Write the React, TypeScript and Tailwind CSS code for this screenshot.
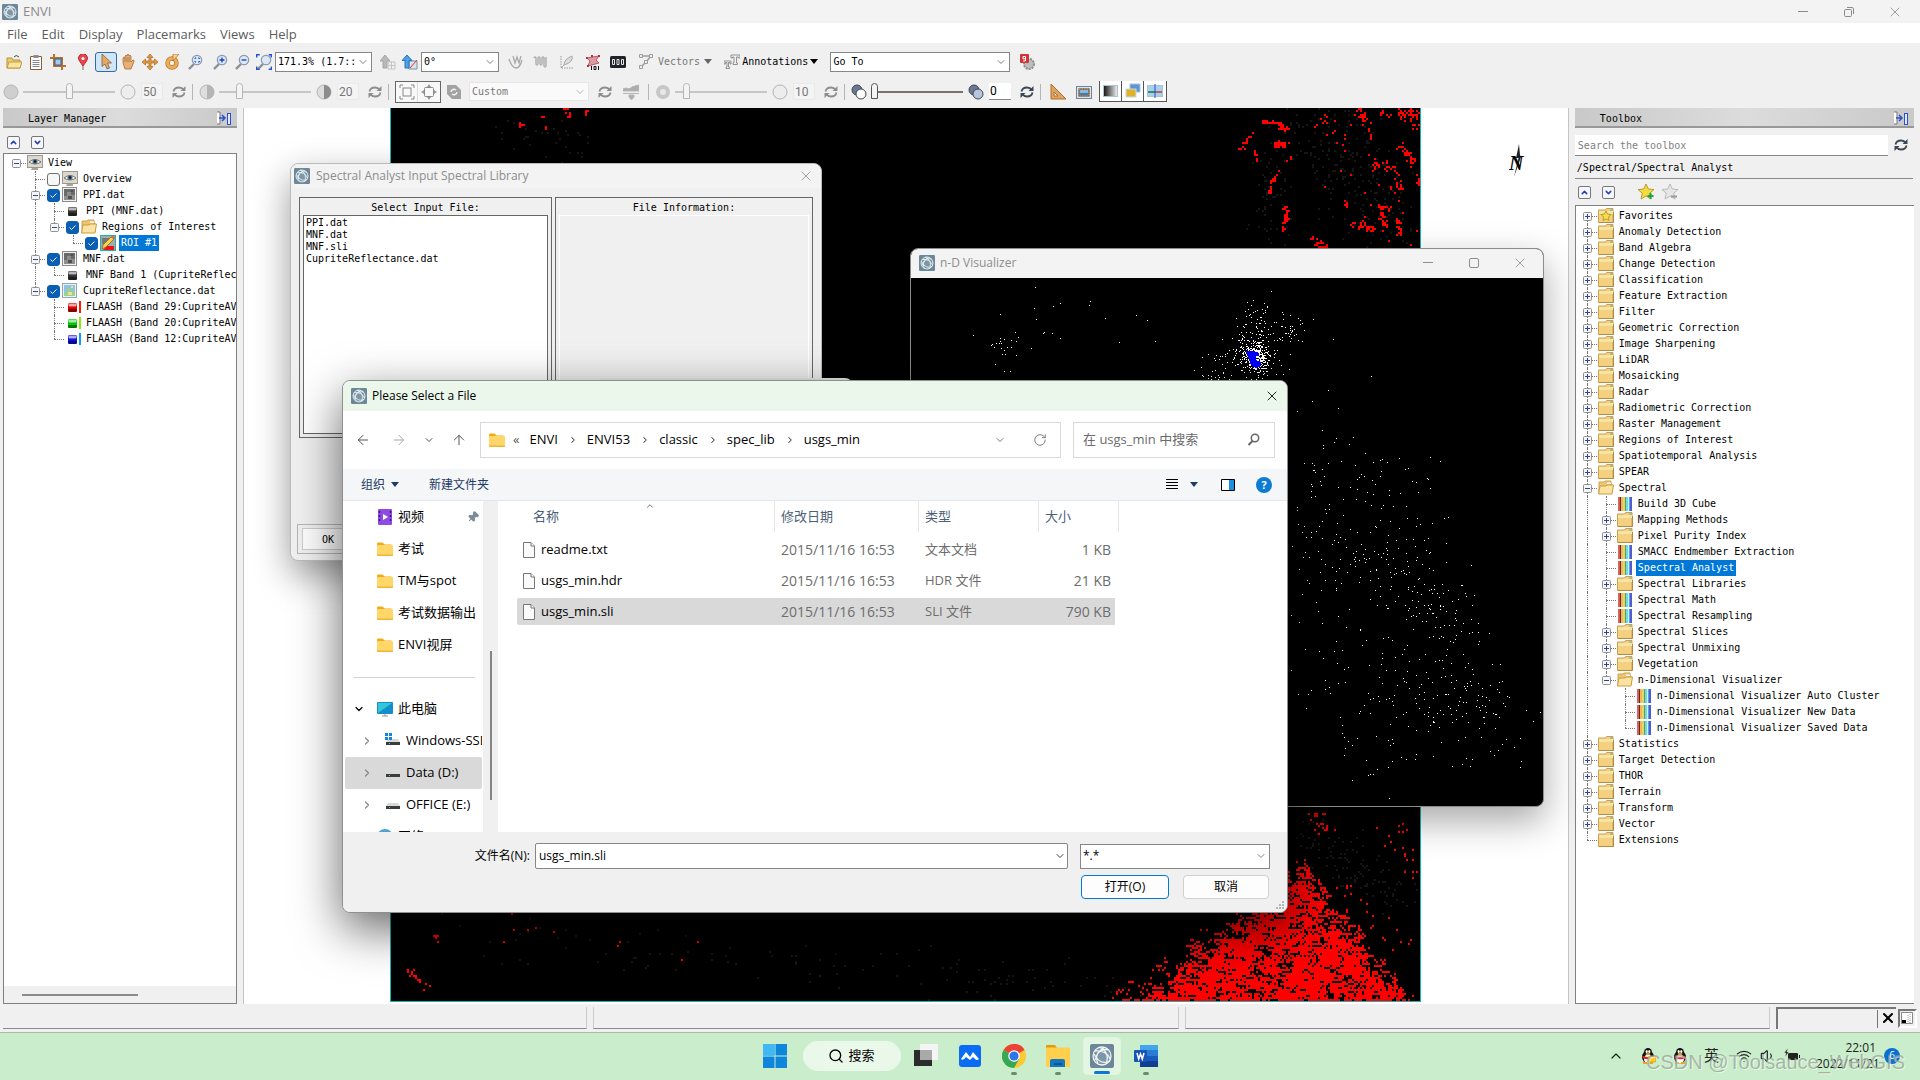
import React from 'react';
import clsx from 'clsx';
import { ArrowLeft, ArrowRight, ArrowUp, ChevronDown, ChevronRight, ChevronUp, Pin, RotateCw, Search, Wifi, Volume1, X } from 'lucide-react';

interface TreeNode {
  label: string;
  icon: string;
  checked?: boolean;
  selected?: boolean;
  collapsed?: boolean;
  children?: TreeNode[];
}

const layers: TreeNode[] = [
  {
    label: 'View',
    icon: 'view',
    children: [
      { label: 'Overview', icon: 'view', checked: false },
      {
        label: 'PPI.dat',
        icon: 'raster',
        checked: true,
        children: [
          { label: 'PPI (MNF.dat)', icon: 'gray' },
          {
            label: 'Regions of Interest',
            icon: 'open',
            checked: true,
            children: [{ label: 'ROI #1', icon: 'roi', checked: true, selected: true }],
          },
        ],
      },
      {
        label: 'MNF.dat',
        icon: 'raster',
        checked: true,
        children: [{ label: 'MNF Band 1 (CupriteReflectance.dat)', icon: 'gray' }],
      },
      {
        label: 'CupriteReflectance.dat',
        icon: 'rgb',
        checked: true,
        children: [
          { label: 'FLAASH (Band 29:CupriteAVIRIS)', icon: 'red' },
          { label: 'FLAASH (Band 20:CupriteAVIRIS)', icon: 'green' },
          { label: 'FLAASH (Band 12:CupriteAVIRIS)', icon: 'blue' },
        ],
      },
    ],
  },
];

const folder = (label: string): TreeNode => ({ label, icon: 'folder', collapsed: true });
const tool = (label: string, selected = false): TreeNode => ({ label, icon: 'tool', selected });

const toolbox: TreeNode[] = [
  { label: 'Favorites', icon: 'favorites', collapsed: true },
  folder('Anomaly Detection'),
  folder('Band Algebra'),
  folder('Change Detection'),
  folder('Classification'),
  folder('Feature Extraction'),
  folder('Filter'),
  folder('Geometric Correction'),
  folder('Image Sharpening'),
  folder('LiDAR'),
  folder('Mosaicking'),
  folder('Radar'),
  folder('Radiometric Correction'),
  folder('Raster Management'),
  folder('Regions of Interest'),
  folder('Spatiotemporal Analysis'),
  folder('SPEAR'),
  {
    label: 'Spectral',
    icon: 'open',
    children: [
      tool('Build 3D Cube'),
      folder('Mapping Methods'),
      folder('Pixel Purity Index'),
      tool('SMACC Endmember Extraction'),
      tool('Spectral Analyst', true),
      folder('Spectral Libraries'),
      tool('Spectral Math'),
      tool('Spectral Resampling'),
      folder('Spectral Slices'),
      folder('Spectral Unmixing'),
      folder('Vegetation'),
      {
        label: 'n-Dimensional Visualizer',
        icon: 'open',
        children: [
          tool('n-Dimensional Visualizer Auto Cluster'),
          tool('n-Dimensional Visualizer New Data'),
          tool('n-Dimensional Visualizer Saved Data'),
        ],
      },
    ],
  },
  folder('Statistics'),
  folder('Target Detection'),
  folder('THOR'),
  folder('Terrain'),
  folder('Transform'),
  folder('Vector'),
  { label: 'Extensions', icon: 'folder' },
];

const files = [
  { name: 'readme.txt', date: '2015/11/16 16:53', type: '文本文档', size: '1 KB' },
  { name: 'usgs_min.hdr', date: '2015/11/16 16:53', type: 'HDR 文件', size: '21 KB' },
  { name: 'usgs_min.sli', date: '2015/11/16 16:53', type: 'SLI 文件', size: '790 KB' },
];

// small seeded generator, so that the clouds come out the same on every render
function createRandom(seed: number) {
  let s = seed;
  return () => {
    s = (s * 1664525 + 1013904223) % 4294967296;
    return s / 4294967296;
  };
}

function gauss(random: () => number) {
  return (random() + random() + random() + random() - 2) * 1.2;
}

// x1, y1, x2, y2, spread, count
type Streak = [number, number, number, number, number, number];

const roiStreaks: Streak[] = [
  [1262, 121, 1277, 121, 1, 16],
  [1276, 122, 1286, 130, 2, 24],
  [1251, 133, 1240, 150, 2, 14],
  [1273, 144, 1284, 144, 3, 44],
  [1253, 150, 1256, 160, 1, 8],
  [1291, 154, 1286, 164, 1, 6],
  [1278, 171, 1268, 182, 2, 12],
  [1269, 186, 1269, 193, 1, 8],
  [1285, 205, 1285, 218, 2, 26],
  [1283, 220, 1283, 230, 1, 12],
  [1360, 109, 1367, 128, 3, 30],
  [1367, 128, 1372, 138, 1, 6],
  [1395, 112, 1418, 112, 4, 44],
  [1412, 123, 1416, 127, 2, 8],
  [1396, 143, 1414, 162, 3, 34],
  [1373, 163, 1396, 169, 3, 30],
  [1396, 170, 1398, 195, 3, 16],
  [1417, 170, 1417, 184, 1, 10],
  [1345, 201, 1347, 206, 1, 8],
  [1376, 206, 1392, 208, 2, 16],
  [1381, 214, 1387, 229, 3, 22],
  [1351, 223, 1376, 229, 3, 30],
  [1397, 218, 1399, 234, 2, 26],
  [1311, 239, 1325, 247, 3, 18],
  [1316, 124, 1332, 118, 3, 8],
  [1380, 109, 1390, 118, 3, 8],
  [1320, 110, 1410, 245, 26, 34],
  [517, 123, 522, 125, 1, 10],
  [564, 109, 570, 116, 2, 10],
  [581, 109, 587, 112, 2, 6],
  [541, 112, 552, 152, 3, 4],
  [434, 935, 436, 941, 2, 5],
  [408, 972, 424, 988, 3, 16],
  [500, 925, 700, 955, 12, 10],
  [1310, 815, 1330, 830, 6, 20],
  [1385, 812, 1415, 880, 10, 20],
  [1340, 890, 1410, 950, 12, 24],
];

function streakPath(streaks: Streak[], seed: number, cell: number) {
  const random = createRandom(seed);
  const cells = new Set<string>();
  streaks.forEach(([x1, y1, x2, y2, spread, count]) => {
    for (let i = 0; i < count; i++) {
      const t = random();
      const x = x1 + (x2 - x1) * t + gauss(random) * spread;
      const y = y1 + (y2 - y1) * t + gauss(random) * spread;
      cells.add(`${Math.round(x / cell) * cell} ${Math.round(y / cell) * cell}`);
    }
  });
  return [...cells].map((c) => `M${c}h${cell}v${cell}h-${cell}z`).join('');
}

// the big red slope at the lower right of the scene
function slopePath() {
  const random = createRandom(41);
  let d = '';
  for (let y = 858; y < 1001; y += 2) {
    const t = (y - 858) / 143;
    const left = 1286 - Math.pow(t, 1.1) * 184;
    const right = 1304 + t * 112;
    let filled = false;
    for (let x = left; x < right; x += 2) {
      const wave = Math.sin(x * 0.23 + y * 0.09) + Math.sin(y * 0.27 - x * 0.16) + Math.sin((x + y) * 0.061);
      const edge = Math.min((x - left) / 110, (right - x) / 50);
      const chance = Math.min(0.74, 0.16 + edge) + wave * 0.09 + (filled ? 0.1 : -0.1);
      filled = random() < chance;
      if (filled) {
        d += `M${Math.round(x / 2) * 2} ${y}h2v2h-2z`;
      }
    }
  }
  return d;
}

const noiseStreaks: Streak[] = [
  [1310, 110, 1400, 240, 34, 260],
  [1270, 150, 1270, 240, 14, 60],
  [500, 115, 600, 150, 18, 40],
  [420, 930, 1150, 990, 18, 120],
  [1300, 830, 1410, 900, 20, 120],
];

const cloudStreaks: Streak[] = [
  [1252, 352, 1258, 362, 7, 420],
  [1250, 340, 1262, 368, 14, 240],
  [1258, 325, 1262, 305, 14, 40],
  [1284, 342, 1292, 318, 11, 40],
  [1210, 365, 1235, 375, 18, 46],
  [996, 348, 1012, 352, 12, 22],
  [985, 330, 1180, 325, 24, 20],
  [1292, 380, 1360, 500, 32, 22],
  [1310, 480, 1420, 470, 18, 40],
  [1300, 500, 1310, 620, 26, 50],
  [1370, 520, 1420, 620, 44, 150],
  [1420, 600, 1480, 720, 42, 150],
  [1320, 640, 1400, 770, 40, 80],
  [1400, 700, 1500, 730, 36, 50],
];

const mono = "font-['DejaVu_Sans_Mono','Noto_Sans_CJK_SC',monospace] text-[10px]";

function EnviLogo({ className }: { className: string }) {
  return (
    <svg viewBox="0 0 24 24" className={clsx('shrink-0', className)} fill="none">
      <rect width="24" height="24" rx="2" fill="#6b8799" />
      <circle cx="12" cy="12" r="9" fill="#7d97a7" stroke="#f1f5f7" strokeWidth="1.3" />
      <path d="M5 16C7 8 12 4 19 6M4 10c4 8 10 10 16 7M9 3c7 3 10 9 7 17M14 4C7 7 5 13 8 20M5 7c7-1 13 2 15 8" stroke="#eef3f5" strokeWidth="1.3" />
    </svg>
  );
}

function FolderShape({ className }: { className?: string }) {
  return (
    <svg viewBox="0 0 16 16" className={clsx('size-4 shrink-0', className)}>
      <path d="M0 2.700Q0 1.500 1.200 1.500h4.300L7.500 3.500H14q1 0 1 1v2H0z" fill="#f0ac12" />
      <rect y="4" width="16" height="11" rx="1" fill="#ffd768" />
      <path d="M0 13.500h16v.5q0 1-1 1H1q-1 0-1-1z" fill="#eeb537" />
    </svg>
  );
}

function NodeIcon({ type }: { type: string }) {
  const cls = 'size-4 shrink-0';
  if (type === 'folder' || type === 'favorites') {
    return (
      <svg viewBox="0 0 16 16" className={cls}>
        <path d="M.5 2h7l1-1.500h6.500V14.500H.5z" fill="#f3d180" stroke="#cf9f4c" />
        <path d="M1 3h14v3H1z" fill="#f8e3a6" />
        <path d="M1 14.500h14.500V4" stroke="#ba8740" fill="none" />
        <path d="M12 2h3" stroke="#49b3d6" />
        {type === 'favorites' && (
          <path d="m8 3 1.500 3 3.500.5-2.500 2.500.6 3.500L8 11l-3 1.500.5-3.500L3 6.500 6.500 6z" fill="#f5e04a" stroke="#a98d14" strokeWidth=".8" />
        )}
      </svg>
    );
  }
  if (type === 'open') {
    return (
      <svg viewBox="0 0 16 16" className={cls}>
        <path d="M1 13V2h5l1-1h6v3h1v9z" fill="#efc66d" stroke="#cf9f4c" />
        <path d="M9 2.500h4V4H9z" fill="#fff" />
        <path d="M.5 14 2 6h6l1-1h6.500L14 14z" fill="#fae3a0" stroke="#cb9a45" />
      </svg>
    );
  }
  if (type === 'tool') {
    return (
      <svg viewBox="0 0 16 16" className={cls}>
        <rect x="1" y="1" width="2" height="14" fill="#d8615c" />
        <rect x="3" y="1" width="1" height="14" fill="#5b2c2c" />
        <rect x="4" y="1" width="2" height="14" fill="#f6b45c" />
        <rect x="6" y="1" width="2" height="14" fill="#e0d860" />
        <rect x="8" y="1" width="1" height="14" fill="#5f9a62" />
        <rect x="9" y="1" width="2" height="14" fill="#6edce0" />
        <rect x="11" y="1" width="1" height="14" fill="#c4f5f8" />
        <rect x="12" y="1" width="1" height="14" fill="#57a4ea" />
        <rect x="13" y="1" width="2" height="14" fill="#555ace" />
      </svg>
    );
  }
  if (type === 'view') {
    return (
      <svg viewBox="0 0 16 16" className={cls}>
        <rect x=".5" y=".5" width="15" height="12" fill="#dcd8d0" stroke="#9d978d" />
        <path d="M5 13h6v2H4z" fill="#a8a298" />
        <path d="M2 7q6-5 12 0-6 4-12 0z" fill="#fff" stroke="#555" strokeWidth=".8" />
        <circle cx="8" cy="6.500" r="2.600" fill="#56788f" />
        <circle cx="8" cy="6.500" r="1.200" fill="#111" />
      </svg>
    );
  }
  if (type === 'raster' || type === 'rgb') {
    const rgb = type === 'rgb';
    return (
      <svg viewBox="0 0 16 16" className={cls}>
        <rect x=".5" y=".5" width="14" height="14" fill="#f0f0f0" stroke={rgb ? '#8da9bb' : '#8c8c8c'} />
        <rect x="2" y="2" width="11" height="11" fill={rgb ? '#8cc4e8' : '#6a6a6a'} />
        <path d="M2 9h3V5h4v3h4v5H2z" fill={rgb ? '#9fd08b' : '#8e8e8e'} />
        <path d="M6 9h4v3H6zM9 3h2v2H9z" fill={rgb ? '#e8e39a' : '#505050'} />
      </svg>
    );
  }
  if (type === 'roi') {
    return (
      <svg viewBox="0 0 16 16" className={cls}>
        <rect x=".5" y=".5" width="15" height="15" fill="#a9a9a9" stroke="#19b5ad" />
        <path d="M2 3h8v6H2z" fill="#777" />
        <path d="M3 15l4-4h7v4z" fill="#ee1414" />
        <path d="m2 14 1-4 8-8 3 2-8 8z" fill="#f6d552" stroke="#866a18" strokeWidth=".8" />
        <path d="m11 2 1.500-1.500 2.500 2L14 4z" fill="#e06055" />
      </svg>
    );
  }
  const colors: Record<string, [string, string]> = {
    gray: ['#333333', '#ffffff'],
    red: ['#e00000', '#ff1d00'],
    green: ['#00c800', '#84f000'],
    blue: ['#1010e0', '#0a9cff'],
  };
  const [fill, bar] = colors[type];
  return (
    <svg viewBox="0 0 16 16" className={cls}>
      <rect x="3" y="4" width="9" height="9" rx="1.500" fill={fill} />
      <rect x="3.500" y="4.500" width="8" height="3" rx="1" fill="#fff" opacity=".65" />
      <rect x="3" y="10" width="9" height="3" rx="1" fill="#000" opacity=".4" />
      <rect x="14" y="2" width="2" height="12" fill={bar} />
    </svg>
  );
}

function Check({ label, checked }: { label: string; checked: boolean }) {
  return (
    <span className="relative mr-0.5 ml-px flex size-[13px] shrink-0">
      <input
        type="checkbox"
        aria-label={label}
        defaultChecked={checked}
        className="size-[13px] appearance-none rounded-[3px] border border-[#707070] bg-[#f7f7f7] checked:border-[#0a5fb4] checked:bg-[#0a5fb4]"
      />
      {checked && (
        <svg viewBox="0 0 13 13" className="pointer-events-none absolute inset-0" fill="none" stroke="#fff">
          <path d="m3.500 6.500 2 2 4-4" />
        </svg>
      )}
    </span>
  );
}

function TreeRows({ nodes, guides = [] }: { nodes: TreeNode[]; guides?: boolean[] }) {
  return (
    <>
      {nodes.map((node, i) => {
        const last = i === nodes.length - 1;
        const first = guides.length === 0 && i === 0;
        return (
          <React.Fragment key={node.label}>
            <li className="flex h-4 items-center whitespace-nowrap">
              {guides.map((more, g) => (
                <span key={g} className="flex h-4 w-[19px] shrink-0 pl-[9px]">
                  {more && <span className="border-l border-dotted border-[#777]" />}
                </span>
              ))}
              <span className="relative flex h-4 w-[19px] shrink-0 items-center pl-[9px]">
                {!first && <span className="absolute top-0 left-[9px] h-2 border-l border-dotted border-[#777]" />}
                {!last && <span className="absolute top-2 left-[9px] h-2 border-l border-dotted border-[#777]" />}
                <span className="grow border-t border-dotted border-[#777]" />
                {(node.children || node.collapsed) && (
                  <svg viewBox="0 0 9 9" className="absolute top-[4px] left-[5px] size-[9px]">
                    <rect x=".5" y=".5" width="8" height="8" rx="1" fill="#f6f6f6" stroke="#919191" />
                    <path d={node.children ? 'M2 4.500h5' : 'M2 4.500h5M4.500 2v5'} stroke="#29479b" />
                  </svg>
                )}
              </span>
              <span className="ml-px flex items-center">
                {node.checked !== undefined && <Check label={node.label} checked={node.checked} />}
                <NodeIcon type={node.icon} />
              </span>
              <span className={clsx('ml-[3px] h-4 px-0.5 leading-4', node.selected && 'bg-[#0078d7] text-white')}>{node.label}</span>
            </li>
            {node.children && <TreeRows nodes={node.children} guides={[...guides, !last]} />}
          </React.Fragment>
        );
      })}
    </>
  );
}

function ToolButton({ label, active, className, children }: { label: string; active?: boolean; className?: string; children: React.ReactNode }) {
  return (
    <button
      aria-label={label}
      className={clsx('flex h-5 w-[22px] shrink-0 items-center justify-center', active && 'rounded-[3px] border border-[#2f6da8] bg-[#cfe5f8]', className)}
    >
      <svg viewBox="0 0 16 16" className="size-4" fill="none">
        {children}
      </svg>
    </button>
  );
}

function Combo({ label, value, className, disabled, chevron }: { label: string; value: string; className: string; disabled?: boolean; chevron?: string }) {
  return (
    <span className={clsx('relative flex shrink-0', className)}>
      <select
        aria-label={label}
        disabled={disabled}
        className={clsx('w-full appearance-none border pr-3 pl-0.5', disabled ? 'border-[#e6e6e6] bg-[#fafafa] text-[#777]' : 'border-[#868686] bg-white text-black')}
      >
        <option>{value}</option>
      </select>
      <ChevronDown className={clsx('pointer-events-none absolute inset-y-0 right-[3px] my-auto size-3', chevron ?? 'text-[#555]')} strokeWidth={1.5} />
    </span>
  );
}

function Slider({ label, value, disabled }: { label: string; value: number; disabled?: boolean }) {
  return (
    <input
      type="range"
      aria-label={label}
      defaultValue={value}
      disabled={disabled}
      className={clsx(
        'h-4 w-[92px] shrink-0 appearance-none bg-transparent',
        '[&::-webkit-slider-runnable-track]:h-[2px] [&::-webkit-slider-thumb]:-mt-[8px] [&::-webkit-slider-thumb]:h-4 [&::-webkit-slider-thumb]:w-[7px] [&::-webkit-slider-thumb]:appearance-none [&::-webkit-slider-thumb]:rounded-t-[4px] [&::-webkit-slider-thumb]:border [&::-webkit-slider-thumb]:bg-[#f4f4f4]',
        disabled
          ? '[&::-webkit-slider-runnable-track]:bg-[#c6c6c6] [&::-webkit-slider-thumb]:border-[#b5b5b5]'
          : '[&::-webkit-slider-runnable-track]:bg-[#77736a] [&::-webkit-slider-thumb]:border-[#555]'
      )}
    />
  );
}

function NumberBox({ label, value, disabled }: { label: string; value: string; disabled?: boolean }) {
  return (
    <input
      aria-label={label}
      defaultValue={value}
      disabled={disabled}
      className={clsx('h-[17px] w-[22px] shrink-0 px-px font-[Roboto] text-xs', disabled ? 'border border-[#e9e9e9] bg-[#f4f4f4] text-[#777]' : 'border-b border-[#888] bg-white')}
    />
  );
}

function Refresh({ dark, className }: { dark?: boolean; className?: string }) {
  return (
    <ToolButton label="Reset" className={className}>
      <g stroke={dark ? '#3c4654' : '#8d8d8d'} strokeWidth="1.800">
        <path d="M2.500 7.500q.8-4 5.500-4 3 0 5 2.500M13.500 8.500q-.8 4-5.500 4-3 0-5-2.500" />
      </g>
      <path d="M14.500 2v5h-5zM1.500 14V9h5z" fill={dark ? '#3c4654' : '#8d8d8d'} />
    </ToolButton>
  );
}

function Divider() {
  return <span className="h-4 w-px shrink-0 bg-[#b5b5b5]" />;
}

function Magnifier({ children }: { children?: React.ReactNode }) {
  return (
    <>
      <path d="m2 15 5-5" stroke="#8a8f96" strokeWidth="2.400" />
      <circle cx="10" cy="6" r="4.700" fill="#dbe8f8" stroke="#8d9aad" strokeWidth="1.200" />
      {children}
    </>
  );
}

function Ball({ fill, half }: { fill: string; half?: 'left' | 'right' }) {
  return (
    <svg viewBox="0 0 16 16" className="size-4 shrink-0">
      <circle cx="8" cy="8" r="7" fill={fill} stroke="#b4b4b4" />
      {half === 'left' && <path d="M8 1a7 7 0 0 1 0 14z" fill="#b5b5b5" />}
      {half === 'right' && <path d="M8 1a7 7 0 0 1 0 14z" fill="#8c8c8c" />}
    </svg>
  );
}

function Discs({ front }: { front: string }) {
  return (
    <svg viewBox="0 0 16 16" className="size-4 shrink-0" stroke="#3e4754">
      <circle cx="6" cy="6" r="5" fill="#6b7890" />
      <circle cx="10" cy="10" r="5" fill={front} />
    </svg>
  );
}

function MainToolbar() {
  return (
    <div className={clsx('flex h-9 items-center pt-px pl-[3px]', mono)}>
      <ToolButton label="Open">
        <path d="M1 14V4h5l1 2h7v8z" fill="#ecca70" stroke="#b98f35" />
        <path d="m1 14 2-6h13l-2 6z" fill="#fbe59c" stroke="#c39b42" />
        <path d="M8 3q2-3 5 0" stroke="#444" />
      </ToolButton>
      <ToolButton label="Data Manager">
        <path d="M2.500 2.500h11v13h-11z" fill="#fff" stroke="#8a5b35" />
        <path d="M5.500 1h5v3h-5z" fill="#8c8c8c" />
        <path d="M4.500 6.500h7m-7 2h7m-7 2h7m-7 2h7" stroke="#7f8994" />
      </ToolButton>
      <ToolButton label="Crop">
        <path d="M4 0v12h12M0 4h12v12" stroke="#b4722c" strokeWidth="2" />
        <rect x="5" y="5" width="6" height="6" fill="#a9c9ea" stroke="#2f5fa8" />
      </ToolButton>
      <ToolButton label="Placemark" className="ml-[3px]">
        <path d="M8 9v7" stroke="#999" strokeWidth="1.500" />
        <path d="M8 12 4.500 7a4.500 4.500 0 1 1 7 0z" fill="#e5474d" stroke="#c42b32" />
        <circle cx="8" cy="4.500" r="1.500" fill="#fff" />
      </ToolButton>
      <ToolButton label="Select" active className="ml-px">
        <path d="M4 0v12.500l3-2.500 2 5 2.500-1-2-5h4z" fill="#e3a967" stroke="#8d5b2a" strokeWidth=".8" />
      </ToolButton>
      <ToolButton label="Pan">
        <path d="M3 9V4q1-1.500 2 0V2q1-1.500 2 0V1q1-1.500 2 0v1q1-1.500 2 0v6l2-2q1.500 0 1 1.500L11 15H5z" fill="#e6b078" stroke="#a56e33" strokeWidth=".8" />
        <path d="M5 4v4m2-5v5m2-5v5" stroke="#a56e33" strokeWidth=".8" />
      </ToolButton>
      <ToolButton label="Fly">
        <path d="m8 0 3 3.500H9V7h3.500V5L16 8l-3.500 3V9H9v3.500h2L8 16l-3-3.500h2V9H3.500v2L0 8l3.500-3v2H7V3.500H5z" fill="#e2983d" stroke="#a8641c" strokeWidth=".7" />
      </ToolButton>
      <ToolButton label="Rotate">
        <circle cx="8" cy="9" r="4.500" stroke="#bb7424" strokeWidth="4.500" />
        <circle cx="8" cy="9" r="4.500" stroke="#eaae5b" strokeWidth="3" />
        <path d="M9 0h6L9 7z" fill="#f6cf92" stroke="#bb7424" strokeWidth=".8" />
      </ToolButton>
      <ToolButton label="Zoom" className="ml-px">
        <Magnifier>
          <path d="M8 5V4h1.200m2 0H12.300v1m0 2v1h-1.200M9 8H8V7" stroke="#173ebc" />
        </Magnifier>
      </ToolButton>
      <ToolButton label="Zoom In" className="ml-[3px]">
        <Magnifier>
          <path d="M7.500 6h5M10 3.500v5" stroke="#173ebc" strokeWidth="1.300" />
        </Magnifier>
      </ToolButton>
      <ToolButton label="Zoom Out">
        <Magnifier>
          <path d="M7.500 6h5" stroke="#173ebc" strokeWidth="1.300" />
        </Magnifier>
      </ToolButton>
      <ToolButton label="Zoom to Extent">
        <Magnifier />
        <path d="M.7 3.500V.7h3m9 0h2.600v2.800m0 9v2.800h-2.600m-9 0h-3v-2.800" stroke="#2c50c8" strokeWidth="1.400" />
      </ToolButton>
      <Combo label="Zoom factor" value="171.3% (1.7::" className="h-5 w-[97px]" />
      <ToolButton label="North Up" className="ml-[5px]">
        <path d="M5 1 0 7h3v7h4V7h3z" fill="#b9b9b9" stroke="#a6a6a6" />
        <path d="M8 8h7v7H8zM11.500 8v7M8 11.500h7" stroke="#c3c3c3" />
      </ToolButton>
      <ToolButton label="Rotate to">
        <path d="M7 7h8v8H7z" fill="#d7e4ef" stroke="#7c8f9e" />
        <path d="M5 1 0 6.500h3V14h4V6.500h3z" fill="#4aa1e8" stroke="#2c73b8" />
        <path d="m8 14 7-8" stroke="#d33" />
      </ToolButton>
      <Combo label="Rotation" value="0°" className="h-5 w-[78px]" />
      <ToolButton label="Vertex" className="ml-[6px]">
        <path d="M1 5q3 9 7 9t6-8M5 2l2 7 2-6 2 6 2-7" stroke="#a9a9a9" strokeWidth="1.300" />
      </ToolButton>
      <ToolButton label="Profile" className="ml-[3px]">
        <path d="M1 4q1-2 2 0v6q1 2 2 0V4q1-2 2 0v6q1 2 2 0V4q1-2 2 0v8q1 2 2 0V3" stroke="#b0b0b0" strokeWidth="1.500" />
      </ToolButton>
      <ToolButton label="Scatter Plot" className="ml-1">
        <path d="M2 2v12h13" stroke="#9a9a9a" strokeDasharray="1.500 1" />
        <path d="M5 11q0-6 8-9 2 6-8 9l-3 3" stroke="#ababab" fill="#dcdcdc" />
      </ToolButton>
      <ToolButton label="Region of Interest" className="ml-1">
        <path d="m2 4 12-2-3 4 3 3-11 3 2-5z" fill="#dc9aa2" stroke="#b55a66" />
        <path d="M1 3h2v2H1zM13 1h2v2h-2zM2 11h2v2H2zM6 1h2v2H6z" fill="#b82d40" />
        <path d="M6.500 12v4M9 12.500h2v3H9zM13.500 12v4" stroke="#111" />
      </ToolButton>
      <ToolButton label="Cursor Value" className="ml-[3px]">
        <rect y="2" width="16" height="12" rx="1.500" fill="#20242a" />
        <path d="M2.500 5.500h2v5h-2zM7 5.500h2v5H7zM11.500 5.500h2v5h-2z" stroke="#e8e8e8" />
      </ToolButton>
      <button className="ml-[9px] flex items-center gap-1 text-[#777]">
        <svg viewBox="0 0 16 16" className="size-4" fill="none" stroke="#9d9d9d">
          <path d="M3 2h10L8 8l-5 5" strokeWidth="1.500" />
          <path d="M1.500.5h3v3h-3zM11.500.5h3v3h-3zM6.500 6.500h3v3h-3zM1.500 11.500h3v3h-3z" fill="#eee" />
        </svg>
        Vectors
        <span className="border-x-4 border-t-[5px] border-x-transparent border-t-[#666]" />
      </button>
      <button className="ml-3 flex items-center gap-0.5">
        <svg viewBox="0 0 16 16" className="size-4" fill="none" stroke="#888">
          <path d="M7 1h9v3h-1.500V3h-2v6h1v1.500H9V9h1V3H8.500v1H7zM0 7h7v3H6V8.500H4.500V13h1v1.500H2V13h1V8.500H1.500V10H0z" fill="#f2f2f2" strokeWidth=".9" />
        </svg>
        Annotations
        <span className="border-x-4 border-t-[5px] border-x-transparent border-t-black" />
      </button>
      <Combo label="Go To" value="Go To" className="ml-3 h-5 w-[180px]" />
      <ToolButton label="Messages" className="ml-[6px]">
        <circle cx="10" cy="10" r="5" fill="#bdbdbd" stroke="#8d8d8d" strokeDasharray="2 1" strokeWidth="2" />
        <rect width="9" height="9" x="1" rx="1" fill="#cf3237" />
        <path d="M4 7h2.500V2.500H4v2.300h2.500" stroke="#fff" />
      </ToolButton>
    </div>
  );
}

function DisplayToolbar() {
  return (
    <div className={clsx('flex h-[29px] items-center pb-1 pl-[3px]', mono)}>
      <Ball fill="#cfcfcf" />
      <span className="ml-1 flex"><Slider label="Brightness" value={50} disabled /></span>
      <span className="mx-[5px] flex"><Ball fill="#ededed" /></span>
      <NumberBox label="Brightness value" value="50" disabled />
      <Refresh className="mr-0.5 ml-[5px]" />
      <Divider />
      <span className="mr-1 ml-1.5 flex"><Ball fill="#ddd" half="left" /></span>
      <Slider label="Contrast" value={20} disabled />
      <span className="mx-[5px] flex"><Ball fill="#ddd" half="right" /></span>
      <NumberBox label="Contrast value" value="20" disabled />
      <Refresh className="mr-0.5 ml-[5px]" />
      <Divider />
      <span className="ml-1.5 flex border border-[#666] bg-[#f8f8f8]">
        <ToolButton label="Stretch on extent" className="border-r border-[#ddd]">
          <rect x="4" y="4" width="8" height="8" stroke="#888" />
          <path d="M1 4V1h3m8 0h3v3m0 8v3h-3m-8 0H1v-3" stroke="#888" />
        </ToolButton>
        <ToolButton label="Stretch on view">
          <rect x="3.500" y="3.500" width="9" height="9" rx="1" stroke="#888" />
          <path d="M6 3h4L8 0zM6 13h4l-2 3zM3 6v4L0 8zM13 6v4l3-2z" fill="#999" />
        </ToolButton>
      </span>
      <ToolButton label="Update stretch" className="ml-0.5">
        <path d="M1 1h9l5 5v9H6l-5-5z" fill="#a2a2a2" />
        <path d="M5 8a3 3 0 0 1 5-2M11 8a3 3 0 0 1-5 2" stroke="#f0f0f0" strokeWidth="1.500" />
      </ToolButton>
      <Combo label="Stretch type" value="Custom" className="ml-1 h-[19px] w-[120px]" disabled chevron="text-[#999]" />
      <Refresh className="ml-[5px]" />
      <ToolButton label="Histogram stretch" className="ml-1">
        <path d="M0 7V5l3-1 3 1 3-2 3-1 4-1v6zM0 9.500h16M6 11h5v2l-2.500 3L6 13z" fill="#adadad" stroke="#b5b5b5" />
      </ToolButton>
      <span className="ml-1.5 flex"><Divider /></span>
      <svg viewBox="0 0 16 16" className="mr-1 ml-1.5 size-4 shrink-0">
        <circle cx="8" cy="8" r="5" fill="#e8e8e8" stroke="#c7c7c7" strokeWidth="4" />
      </svg>
      <Slider label="Sharpen" value={9} disabled />
      <span className="mx-[5px] flex"><Ball fill="#ededed" /></span>
      <NumberBox label="Sharpen value" value="10" disabled />
      <Refresh className="mr-0.5 ml-[5px]" />
      <Divider />
      <span className="mr-1 ml-1.5 flex"><Discs front="#fff" /></span>
      <Slider label="Transparency" value={0} />
      <span className="mx-[5px] flex"><Discs front="#b8c4dc" /></span>
      <NumberBox label="Transparency value" value="0" />
      <Refresh dark className="mr-0.5 ml-[5px]" />
      <Divider />
      <ToolButton label="Mensuration" className="ml-1.5">
        <path d="M1 0v15h15zM4 8l4 4H4z" fill="#e0a462" stroke="#b06c2a" fillRule="evenodd" />
      </ToolButton>
      <ToolButton label="Chip" className="ml-1">
        <rect x=".5" y="2.500" width="15" height="12" fill="#d9e6ef" stroke="#6f8496" />
        <rect x="3" y="5" width="10" height="7" fill="#8db8dd" stroke="#222" />
        <rect x="3" y="5" width="10" height="7" stroke="#e39a4a" strokeDasharray="1.500 1" />
        <path d="M4 9h8v2H4z" fill="#4a78a8" />
      </ToolButton>
      <span className="ml-1 flex border-x border-b border-[#555] bg-white">
        <ToolButton label="Blend" className="border-r border-[#555]">
          <defs>
            <linearGradient id="blend">
              <stop stopColor="#111" />
              <stop offset="1" stopColor="#f4f4f4" />
            </linearGradient>
          </defs>
          <rect x=".5" y="2.500" width="14" height="11" fill="url(#blend)" stroke="#a9c4d4" />
        </ToolButton>
        <ToolButton label="Flicker" className="border-r border-[#555]">
          <rect x="5" y="1" width="10" height="8" fill="#5b95d8" stroke="#a9c4d4" />
          <rect x="1" y="6" width="10" height="8" fill="#ddb32c" stroke="#c9d8e0" />
        </ToolButton>
        <ToolButton label="Swipe">
          <rect x=".5" y="2.500" width="15" height="11" fill="#a9d0f0" stroke="#a9c4d4" />
          <path d="M8 8h7v2H8z" fill="#b66b58" />
          <path d="M1 8h7v2H1z" fill="#3f8b62" />
          <path d="M8 1v14" stroke="#1c4fd0" />
        </ToolButton>
      </span>
    </div>
  );
}

function PanelHeader({ title }: { title: string }) {
  return (
    <div className="flex h-5 items-center justify-between border-b-2 border-[#989898] bg-linear-to-r from-[#c9c9c9] via-[#dcdcdc] to-[#c9c9c9] pt-0.5 pr-[5px] pl-[25px]">
      <h2>{title}</h2>
      <button aria-label="Unpin panel">
        <svg viewBox="0 0 16 14" className="h-3.5 w-4" fill="none">
          <path d="M1 1h3v12H1" fill="#fff" stroke="#777" />
          <path d="M3 7h6M6 4l3 3-3 3" stroke="#2c50c8" strokeWidth="1.500" />
          <rect x="11.500" y="2.500" width="3" height="11" stroke="#2c50c8" fill="#dfe8ff" />
        </svg>
      </button>
    </div>
  );
}

function ExpandButtons() {
  return (
    <div className="flex gap-[11px]">
      <button aria-label="Collapse all" className="flex size-[13px] items-center justify-center rounded-xs border border-[#777] bg-[#f6f6ff]">
        <ChevronUp className="size-[9px] text-[#2440b0]" strokeWidth={4} />
      </button>
      <button aria-label="Expand all" className="flex size-[13px] items-center justify-center rounded-xs border border-[#777] bg-[#f6f6ff]">
        <ChevronDown className="size-[9px] text-[#2440b0]" strokeWidth={4} />
      </button>
    </div>
  );
}

function LayerManager() {
  return (
    <aside className={clsx('flex w-[234px] shrink-0 flex-col', mono)}>
      <PanelHeader title="Layer Manager" />
      <div className="flex h-[25px] items-center pt-1 pl-1">
        <ExpandButtons />
      </div>
      <div className="flex grow flex-col justify-between overflow-hidden border border-[#808080] bg-white">
        <ul className="pt-px pl-[3px]">
          <TreeRows nodes={layers} />
        </ul>
        <div className="flex h-[17px] items-center bg-[#f0f0f0] pl-[18px]">
          <span className="h-0.5 w-[116px] bg-[#8a8a8a]" />
        </div>
      </div>
    </aside>
  );
}

function Toolbox() {
  return (
    <aside className={clsx('mr-[9px] flex w-[339px] shrink-0 flex-col', mono)}>
      <PanelHeader title="Toolbox" />
      <div className="mt-[6px] flex h-[22px] items-center gap-0.5">
        <input aria-label="Search the toolbox" placeholder="Search the toolbox" className="h-[21px] w-[313px] border-b border-[#888] bg-white px-[3px] pt-px placeholder:text-[#808080]" />
        <Refresh dark />
      </div>
      <p className="mt-[3px] mr-px h-5 border-b border-[#888] px-0.5 leading-[18px]">/Spectral/Spectral Analyst</p>
      <div className="flex h-[26px] items-center gap-5 pl-[3px]">
        <ExpandButtons />
        <span className="flex gap-0.5">
          <ToolButton label="Add to favorites">
            <path d="m8 0 2.300 5 5.700.6-4.300 3.600L13 15l-5-3-5 3 1.300-5.800L0 5.600 5.700 5z" fill="#f3dc3e" stroke="#a48c1d" strokeWidth=".8" />
            <path d="M12.500 9v6m-3-3h6" stroke="#1da53a" strokeWidth="2" />
          </ToolButton>
          <ToolButton label="Remove from favorites">
            <path d="m8 0 2.300 5 5.700.6-4.300 3.600L13 15l-5-3-5 3 1.300-5.800L0 5.600 5.700 5z" fill="#e6e6e6" stroke="#adadad" strokeWidth=".8" />
            <path d="M9 12.500h6" stroke="#999" strokeWidth="2" />
          </ToolButton>
        </span>
      </div>
      <div className="grow overflow-hidden border-y border-l border-[#808080] bg-white">
        <ul className="pt-0.5 pl-0.5">
          <TreeRows nodes={toolbox} />
        </ul>
      </div>
    </aside>
  );
}

function Viewport() {
  return (
    <main className="relative mx-1.5 flex grow border-x border-[#c4c4c4] bg-white">
      <svg viewBox="390 108 1030 894" preserveAspectRatio="xMidYMid slice" className="mr-[147px] mb-0.5 ml-[146px] h-[calc(100%-2px)] grow border-x border-b border-[#12b5b5] bg-black" shapeRendering="crispEdges">
        <path d={streakPath(noiseStreaks, 7, 2)} fill="#161616" />
        <path d={streakPath(roiStreaks, 19, 2)} fill="#f00" />
        <path d={slopePath()} fill="#f00" />
      </svg>
      <svg viewBox="0 0 16 34" className="absolute top-[36px] right-[43px] h-[34px] w-4">
        <path d="M10 0 7 14h2.500L5 33 12 13 11 11z" fill="#222" />
        <text x="0" y="26" fontSize="20" className="font-['Liberation_Serif',serif] font-bold italic">N</text>
      </svg>
    </main>
  );
}

function SpectralDialog() {
  return (
    <section className="absolute top-[163px] left-[290px] flex h-[398px] w-[532px] flex-col rounded-lg border border-[#bbb] bg-[#f0f0f0] shadow-[0_14px_36px_rgba(0,0,0,0.4)]">
      <header className="flex h-6 items-center gap-1.5 rounded-t-lg bg-[#f3f3f3] px-[3px] text-[#8d8d8d]">
        <EnviLogo className="size-4" />
        <h2 className="grow text-xs">Spectral Analyst Input Spectral Library</h2>
        <button aria-label="Close" className="mr-1">
          <X className="size-4" strokeWidth={1.2} />
        </button>
      </header>
      <div className={clsx('mx-2 mt-[9px] flex h-[241px] gap-[3px] text-center', mono)}>
        <div className="flex w-[253px] flex-col border border-[#666] p-[3px] pt-0">
          <h3 className="h-[17px] leading-[19px]">Select Input File:</h3>
          <ul className="grow border border-[#666] bg-white pt-px pl-0.5 text-left leading-3">
            <li>PPI.dat</li>
            <li>MNF.dat</li>
            <li>MNF.sli</li>
            <li>CupriteReflectance.dat</li>
          </ul>
        </div>
        <div className="flex grow flex-col border border-[#666] p-[3px] pt-0">
          <h3 className="h-[17px] leading-[19px]">File Information:</h3>
          <div className="grow border border-white" />
        </div>
      </div>
      <div className={clsx('mx-1.5 mt-auto mb-1.5 flex h-[30px] items-center border border-[#b5b5b5] px-1', mono)}>
        <button className="h-[22px] w-[52px] border border-[#ccc] bg-[#fdfdfd]">OK</button>
      </div>
    </section>
  );
}

function VisualizerWindow() {
  return (
    <section className="absolute top-[248px] left-[910px] flex h-[559px] w-[634px] flex-col overflow-hidden rounded-lg border border-[#8c8c8c] bg-black shadow-[0_14px_36px_rgba(0,0,0,0.35)]">
      <header className="flex h-[29px] shrink-0 items-center gap-[5px] bg-[#f3f3f3] pb-0.5 pl-2 text-[#8d8d8d]">
        <EnviLogo className="size-4" />
        <h2 className="grow text-xs">n-D Visualizer</h2>
        <button aria-label="Minimize" className="flex w-[46px] justify-center">
          <span className="w-2.5 border-t border-[#8d8d8d]" />
        </button>
        <button aria-label="Maximize" className="-mx-[5px] flex w-[46px] justify-center">
          <span className="size-2.5 rounded-xs border border-[#8d8d8d]" />
        </button>
        <button aria-label="Close" className="flex w-[46px] justify-center">
          <X className="size-4" strokeWidth={1.2} />
        </button>
      </header>
      <svg viewBox="911 278 632 528" className="grow" shapeRendering="crispEdges">
        <path d={streakPath(cloudStreaks, 23, 1)} fill="#fff" />
        <path d="M1246 351h8l5 2v3h-3v4l5 2v4l-5 2-5-3-3-8z" fill="#00f" />
      </svg>
    </section>
  );
}

function SideItem({ label, icon, trailing }: { label: string; icon?: React.ReactNode; trailing?: React.ReactNode }) {
  return (
    <li className="flex h-8 items-center gap-[5px] pr-1 pl-[33px] whitespace-nowrap">
      {icon ?? <FolderShape />}
      <span className="grow">{label}</span>
      {trailing}
    </li>
  );
}

function DriveItem({ label, system, selected }: { label: string; system?: boolean; selected?: boolean }) {
  return (
    <li className={clsx('mx-px flex h-8 items-center overflow-hidden rounded-xs pl-4 whitespace-nowrap', selected && 'bg-[#d9d9d9]')}>
      <ChevronRight className="size-3 shrink-0 text-[#888]" strokeWidth={2.5} />
      <svg viewBox="0 0 16 16" className="mr-[5px] ml-3 size-4 shrink-0">
        <path d="M3 6h10l2 3H1z" fill="#d6d9de" />
        <rect x="1" y="9" width="14" height="3" fill="#3c3c3c" />
        <rect x="4" y="10" width="1" height="1" fill="#4be04b" />
        {system && <path d="M0 0h3v3H0zM4 0h3v3H4zM0 4h3v3H0zM4 4h3v3H4z" fill="#1286d8" />}
      </svg>
      {label}
    </li>
  );
}

function FileDialog() {
  return (
    <section className="absolute top-[380px] left-[342px] flex h-[533px] w-[946px] flex-col overflow-hidden rounded-lg border border-[#8f8f8f] bg-white text-[13px] shadow-[0_16px_48px_rgba(0,0,0,0.6)]">
      <header className="flex h-[30px] shrink-0 items-center gap-[5px] bg-[#eaf7ea] pr-[7px] pb-px pl-2">
        <EnviLogo className="size-4" />
        <h2 className="grow text-xs">Please Select a File</h2>
        <button aria-label="Close">
          <X className="size-4" strokeWidth={1.3} />
        </button>
      </header>
      <div className="flex h-[58px] shrink-0 items-center px-3 text-[#555]">
        <button aria-label="Back"><ArrowLeft className="size-4" strokeWidth={1.5} /></button>
        <button aria-label="Forward" className="ml-5"><ArrowRight className="size-4 text-[#aaa]" strokeWidth={1.5} /></button>
        <button aria-label="Recent" className="ml-4"><ChevronDown className="size-3" strokeWidth={2} /></button>
        <button aria-label="Up" className="ml-4"><ArrowUp className="size-4" strokeWidth={1.5} /></button>
        <nav className="ml-[13px] flex h-9 grow items-center border border-[#d9d9d9] pl-2 text-black">
          <FolderShape />
          <span className="mr-2.5 ml-2 text-[#555]">«</span>
          {['ENVI', 'ENVI53', 'classic', 'spec_lib', 'usgs_min'].map((part, i) => (
            <React.Fragment key={part}>
              {i > 0 && <ChevronRight className="mr-[9px] ml-2.5 size-2.5 text-[#444]" strokeWidth={2.5} />}
              <a href="#" className="text-[13px]">{part}</a>
            </React.Fragment>
          ))}
          <ChevronDown className="ml-auto size-3 text-[#666]" strokeWidth={1.8} />
          <button aria-label="Refresh" className="mr-[13px] ml-[27px]"><RotateCw className="size-3.5 text-[#777]" strokeWidth={1.6} /></button>
        </nav>
        <div className="ml-3 flex h-9 w-[202px] items-center border border-[#d9d9d9] pr-[13px] pl-[9px]">
          <input aria-label="Search usgs_min" placeholder="在 usgs_min 中搜索" className="w-0 grow outline-none placeholder:text-[#6b6b6b]" />
          <svg viewBox="0 0 14 14" className="size-3.5" fill="none" stroke="#666" strokeWidth="1.500">
            <circle cx="8" cy="5" r="3.700" />
            <path d="M5.500 8 1.500 12" strokeWidth="2" />
          </svg>
        </div>
      </div>
      <div className="flex h-8 shrink-0 items-center border-b border-[#e3e5e8] bg-[#f4f6f8] pr-[15px] pl-[18px] text-xs text-[#1e3a66]">
        <button className="flex items-center gap-1.5">
          组织
          <span className="border-x-4 border-t-[5px] border-x-transparent border-t-[#1e3a66]" />
        </button>
        <button className="ml-[30px]">新建文件夹</button>
        <button aria-label="View" className="ml-auto flex items-center gap-3">
          <svg viewBox="0 0 12 11" className="h-[11px] w-3" stroke="#000"><path d="M0 .5h12M0 3.500h12M0 6.500h12M0 9.500h12" /></svg>
          <span className="border-x-4 border-t-[5px] border-x-transparent border-t-[#1e3a66]" />
        </button>
        <button aria-label="Preview pane" className="ml-[23px] flex">
          <svg viewBox="0 0 14 12" className="h-3 w-3.5"><path d="M.5.5h13v11H.5z" fill="#fff" stroke="#000" /><path d="M8 1h5v10H8z" fill="#1a8fe0" /></svg>
        </button>
        <button aria-label="Help" className="ml-[21px] size-4 rounded-full bg-[#0b7bd3] text-[11px] leading-4 font-bold text-white">?</button>
      </div>
      <div className="flex h-[331px] shrink-0">
        <ul className="w-[140px] overflow-hidden pl-px">
          <SideItem
            label="视频"
            icon={
              <svg viewBox="0 0 16 16" className="size-4 shrink-0"><rect x="1" width="14" height="16" rx="1" fill="#8f4be0" /><path d="M2.500 2v12M13.500 2v12" stroke="#3d1580" strokeWidth="1.500" strokeDasharray="2 2" /><path d="M6 5v6l5-3z" fill="#fff" /></svg>
            }
            trailing={<Pin className="size-3 rotate-45 fill-[#7d8b99] text-[#7d8b99]" />}
          />
          <SideItem label="考试" />
          <SideItem label="TM与spot" />
          <SideItem label="考试数据输出" />
          <SideItem label="ENVI视屏" />
          <li className="flex h-8 items-center pr-2 pl-[9px]" aria-hidden><span className="grow border-t border-[#d3d3d3]" /></li>
          <li className="flex h-8 items-center pl-[9px]">
            <ChevronDown className="mr-3 size-3" strokeWidth={2.5} />
            <svg viewBox="0 0 16 16" className="mr-[5px] size-4"><rect y="1" width="16" height="12" rx="1" fill="#128fc8" /><path d="M1 2h14L1 12z" fill="#35c5dc" /><path d="M5 15h6M8 13v2" stroke="#8b98a5" /></svg>
            此电脑
          </li>
          <DriveItem label="Windows-SSD (C:)" system />
          <DriveItem label="Data (D:)" selected />
          <DriveItem label="OFFICE (E:)" />
          <li className="flex items-center gap-[5px] pt-1.5 pl-[33px]">
            <span className="size-4 rounded-full bg-[#4fa3cf]" />
            网络
          </li>
        </ul>
        <div className="flex w-[15px] justify-center bg-[#f0f0f0] pt-[150px]">
          <span className="h-[149px] w-0.5 bg-[#858585]" />
        </div>
        <div className="grow overflow-hidden pl-[19px]">
          <table className="-mt-1 w-[602px] table-fixed border-separate border-spacing-x-0 border-spacing-y-1 text-left">
            <colgroup>
              <col className="w-[258px]" />
              <col className="w-[144px]" />
              <col className="w-[120px]" />
              <col className="w-[80px]" />
            </colgroup>
            <thead>
              <tr className="h-[31px] text-[#4c607a]">
                <th className="relative border-r border-[#e5e5e5] pl-4 font-normal">
                  <ChevronUp className="absolute top-0 left-32 size-2.5 text-[#555]" strokeWidth={2} />
                  名称
                </th>
                <th className="border-r border-[#e5e5e5] pl-1.5 font-normal">修改日期</th>
                <th className="border-r border-[#e5e5e5] pl-1.5 font-normal">类型</th>
                <th className="border-r border-[#e5e5e5] pl-1.5 font-normal">大小</th>
              </tr>
            </thead>
            <tbody>
              {files.map((file) => (
                <tr key={file.name} className={clsx('h-[27px] text-[#6d6d6d]', file.name === 'usgs_min.sli' && '[&>td]:bg-[#d9d9d9]')}>
                  <td className="rounded-l-xs pl-1.5 text-black">
                    <span className="flex items-center gap-1.5">
                      <svg viewBox="0 0 12 16" className="h-4 w-3" fill="#fafafa" stroke="#777"><path d="M.5.5h7.500l3.500 3.500v11.500H.5z" /><path d="M8 .5V4h3.500" /></svg>
                      {file.name}
                    </span>
                  </td>
                  <td className="pl-1.5 text-sm">{file.date}</td>
                  <td className="pl-1.5">{file.type}</td>
                  <td className="border-r-4 border-transparent bg-clip-padding pr-1 text-right text-sm">{file.size}</td>
                </tr>
              ))}
            </tbody>
          </table>
        </div>
      </div>
      <footer className="relative flex grow flex-col bg-[#f0f0f0] pt-[11px] pr-[17px] text-xs">
        <div className="flex items-center">
          <label htmlFor="filename" className="w-48 shrink-0 pr-[5px] text-right">文件名(N):</label>
          <span className="relative flex h-[26px] grow">
            <input id="filename" defaultValue="usgs_min.sli" className="w-full rounded-xs border border-[#868686] bg-white px-[3px]" />
            <ChevronDown className="absolute inset-y-0 right-0.5 my-auto size-3" strokeWidth={1.5} />
          </span>
          <Combo label="File type" value="*.*" className="ml-3 h-[25px] w-[190px]" />
        </div>
        <div className="mt-1.5 flex justify-end gap-3.5 pr-px">
          <button className="h-6 w-[88px] rounded-sm border border-[#0078d4] bg-[#fdfdfd]">打开(O)</button>
          <button className="h-6 w-[86px] rounded-sm border border-[#d0d0d0] bg-[#fdfdfd]">取消</button>
        </div>
        <svg viewBox="0 0 9 9" className="absolute right-0.5 bottom-0.5 size-[9px]" fill="#b5b5b5">
          <path d="M6 0h2v2H6zM3 3h2v2H3zM6 3h2v2H6zM0 6h2v2H0zM3 6h2v2H3zM6 6h2v2H6z" />
        </svg>
      </footer>
    </section>
  );
}

function Penguin({ message }: { message?: boolean }) {
  return (
    <svg viewBox="0 0 16 16" className="size-4 shrink-0">
      <ellipse cx="8" cy="9" rx="6" ry="6.500" fill="#111" />
      <ellipse cx="8" cy="4.500" rx="4" ry="4.500" fill="#111" />
      <ellipse cx="8" cy="11" rx="4" ry="4.500" fill="#fff" />
      <ellipse cx="6.700" cy="3.500" rx="1.100" ry="1.500" fill="#fff" />
      <ellipse cx="9.300" cy="3.500" rx="1.100" ry="1.500" fill="#fff" />
      <ellipse cx="8" cy="6" rx="2.500" ry="1" fill="#f6a21c" />
      <path d="M2.500 7.500q5.500 3 11 0v2.500q-5.500 2.500-11 0z" fill="#e02222" />
      <path d="M3 15h4M9 15h4" stroke="#f6a21c" strokeWidth="1.800" />
      {message && <rect x="8" y="8.500" width="8" height="5.500" rx="1" fill="#ffc933" stroke="#c98f10" strokeWidth=".6" />}
    </svg>
  );
}

function Taskbar() {
  return (
    <footer className="relative grid h-12 shrink-0 grid-cols-[1fr_auto_1fr] items-center border-t border-[#a8bba8] bg-[#caeecb] pb-0.5">
      <span />
      <nav className="flex items-center gap-5">
        <button aria-label="Start" className="-mr-1">
          <svg viewBox="0 0 24 24" className="size-6"><path d="M0 0h11.500v11.500H0zM12.500 0H24v11.500H12.500zM0 12.500h11.500V24H0zM12.500 12.500H24V24H12.500z" fill="#0d86dc" /><path d="M0 0h11.500v11.500H0z" fill="#3fb8f4" /></svg>
        </button>
        <button className="-mr-[7px] flex h-[30px] w-[98px] items-center justify-center gap-1 rounded-full bg-[#eaf8ea] text-[13px]">
          <Search className="size-4" strokeWidth={2} />
          搜索
        </button>
        <button aria-label="Task view">
          <svg viewBox="0 0 24 24" className="size-6"><path d="M0 6h18v16H0z" fill="#2b2b2b" /><path d="M6 0h18v16H6z" fill="#f4f4f4" /><path d="M6 6h12v10H6z" fill="#a9a9a9" /></svg>
        </button>
        <button aria-label="Meeting">
          <svg viewBox="0 0 24 24" className="size-6"><rect x="1" y="1" width="22" height="22" rx="3" fill="#0a6cf5" /><path d="m3 15 5-7 4 5 3-5 6 7q-2 2-4 0l-2-2-3 3-4-3q-3 4-5 2z" fill="#fff" /></svg>
        </button>
        <button aria-label="Chrome" className="relative">
          <svg viewBox="0 0 24 24" className="size-6"><circle cx="12" cy="12" r="12" fill="#fcc934" /><path d="M12 12 1.600 6A12 12 0 0 1 22.400 6z" fill="#ea4335" /><path d="M12 12 1.600 6A12 12 0 0 0 12 24l5.200-9z" fill="#34a853" /><path d="M12 6h10.400A12 12 0 0 0 12 0z" fill="#ea4335" /><circle cx="12" cy="12" r="5.800" fill="#fff" /><circle cx="12" cy="12" r="4.600" fill="#2f74e8" /></svg>
          <span className="absolute -bottom-[7px] left-[9px] h-[3px] w-1.5 rounded-full bg-[#708a72]" />
        </button>
        <button aria-label="File Explorer" className="relative">
          <svg viewBox="0 0 24 24" className="size-6"><path d="M0 2q0-1 1-1h8l2 3H0z" fill="#e09d0b" /><rect y="3.500" width="24" height="19.500" rx="1" fill="#ffcf4d" /><path d="M4 23v-6q0-2 2-2h11q2 0 2 2v6z" fill="#1277be" /><path d="M8 19h8v2H8z" fill="#0b5590" /></svg>
          <span className="absolute -bottom-[7px] left-[9px] h-[3px] w-1.5 rounded-full bg-[#708a72]" />
        </button>
        <button aria-label="ENVI" className="relative -mx-[7px] flex h-[38px] w-[38px] items-center justify-center rounded-sm border border-[#e0f2e0] bg-[#e2f6e2]">
          <EnviLogo className="size-6" />
          <span className="absolute bottom-0 left-[10px] h-[3px] w-4 rounded-full bg-[#0a78d4]" />
        </button>
        <button aria-label="Word" className="relative">
          <svg viewBox="0 0 24 24" className="size-6"><path d="M6 1h18v6H6z" fill="#41a5ee" /><path d="M6 6h18v6H6z" fill="#2b7cd3" /><path d="M6 12h18v5H6z" fill="#185abd" /><path d="M6 17h18v6H6z" fill="#103f91" /><rect y="6" width="13" height="12" rx="1" fill="#1a55b5" /><path d="m3 9 1.700 6L6.500 10l1.800 5L10 9" stroke="#fff" strokeWidth="1.500" fill="none" /></svg>
          <span className="absolute -bottom-[7px] left-[9px] h-[3px] w-1.5 rounded-full bg-[#708a72]" />
        </button>
      </nav>
      <div className="flex items-center justify-end gap-4 pr-5 text-[#222]">
        <ChevronUp className="size-4" strokeWidth={1.8} />
        <Penguin message />
        <Penguin />
        <span className="w-4 text-[15px] whitespace-nowrap">英</span>
        <Wifi className="size-4 shrink-0" strokeWidth={1.8} />
        <Volume1 className="-mx-2 size-4 shrink-0" strokeWidth={1.8} />
        <svg viewBox="0 0 16 16" className="size-4 shrink-0">
          <rect x="4" y="5" width="10" height="7" rx="1" fill="#222" />
          <path d="M15.500 7v3" stroke="#222" />
          <path d="M4 0 0 5h2L1 9l4-5H3z" fill="#222" stroke="#caeecb" strokeWidth=".5" />
        </svg>
        <span className="w-[60px] text-right text-xs leading-4 whitespace-nowrap">
          22:01
          <br />
          2022/11/21
        </span>
        <span className="-ml-2 flex size-4 items-center justify-center rounded-full bg-[#0b6fce] text-[10px] text-white">6</span>
      </div>
      <span className="pointer-events-none absolute right-[15px] bottom-1 font-['Liberation_Sans',sans-serif] text-[20px] leading-7 whitespace-nowrap text-[#8f9c90]/70 [text-shadow:1px_1px_0_#fff8]">CSDN @Toolsauce_WebGIS</span>
    </footer>
  );
}

export default function App(): React.ReactNode {
  return (
    <div className="relative flex h-screen min-h-[1000px] flex-col overflow-hidden bg-[#f0f0f0] font-['Open_Sans','Noto_Sans_CJK_SC',sans-serif] text-black">
      <header className="flex h-[23px] shrink-0 items-center gap-[5px] bg-[#f3f3f3] pl-0.5 text-xs text-[#8a8a8a]">
        <EnviLogo className="size-4" />
        <h1 className="grow text-[13px]">ENVI</h1>
        <button aria-label="Minimize" className="flex w-[46px] justify-center"><span className="w-2.5 border-t border-[#8a8a8a]" /></button>
        <button aria-label="Restore" className="-mx-[5px] flex w-[46px] justify-center">
          <svg viewBox="0 0 10 10" className="size-2.5" fill="none" stroke="#8a8a8a"><rect x=".5" y="2.500" width="7" height="7" rx="1" /><path d="M3 .5h5q1.500 0 1.500 1.500v5" /></svg>
        </button>
        <button aria-label="Close" className="mr-0.5 flex w-[46px] justify-center"><X className="size-4" strokeWidth={1.2} /></button>
      </header>
      <nav className="flex h-5 shrink-0 items-center gap-3.5 bg-white pt-0.5 pl-[7px] text-[13px] leading-4 text-[#5c5c5c]">
        {['File', 'Edit', 'Display', 'Placemarks', 'Views', 'Help'].map((item) => (
          <button key={item}>{item}</button>
        ))}
      </nav>
      <MainToolbar />
      <DisplayToolbar />
      <div className="flex min-h-0 grow pl-[3px]">
        <LayerManager />
        <Viewport />
        <Toolbox />
      </div>
      <div className="flex h-7 shrink-0 items-center gap-1.5 pr-[3px] pl-[3px]">
        <span className="h-[22px] grow border-r border-b border-[#8a8a8a] border-r-[#ccc]" />
        <span className="h-[22px] grow border-x border-b border-[#8a8a8a] border-x-[#ccc]" />
        <span className="h-[22px] grow border-x border-b border-[#8a8a8a] border-x-[#ccc]" />
        <span className="flex h-[22px] w-[120px] items-center justify-end border-t-2 border-l-2 border-[#777]">
          <button aria-label="Stop" className="flex h-[18px] border-l border-[#777] pl-0.5 text-black"><X className="size-4" strokeWidth={3} /></button>
        </span>
        <button aria-label="Progress" className="-ml-1 flex size-[19px] items-center justify-center border-2 border-[#777] border-r-white border-b-white">
          <svg viewBox="0 0 12 12" className="size-3"><path d="M.5.5h11v11H.5z" fill="#fff" stroke="#888" /><path d="M1 8h4v3H1z" /><path d="M9 2v9M7 3v8" stroke="#999" strokeDasharray="1 1" /></svg>
        </button>
      </div>
      <Taskbar />
      <VisualizerWindow />
      <SpectralDialog />
      <div className="absolute top-[378px] left-[600px] h-5 w-[253px] rounded-tr-lg bg-[#e9e9e9]" />
      <FileDialog />
    </div>
  );
}
